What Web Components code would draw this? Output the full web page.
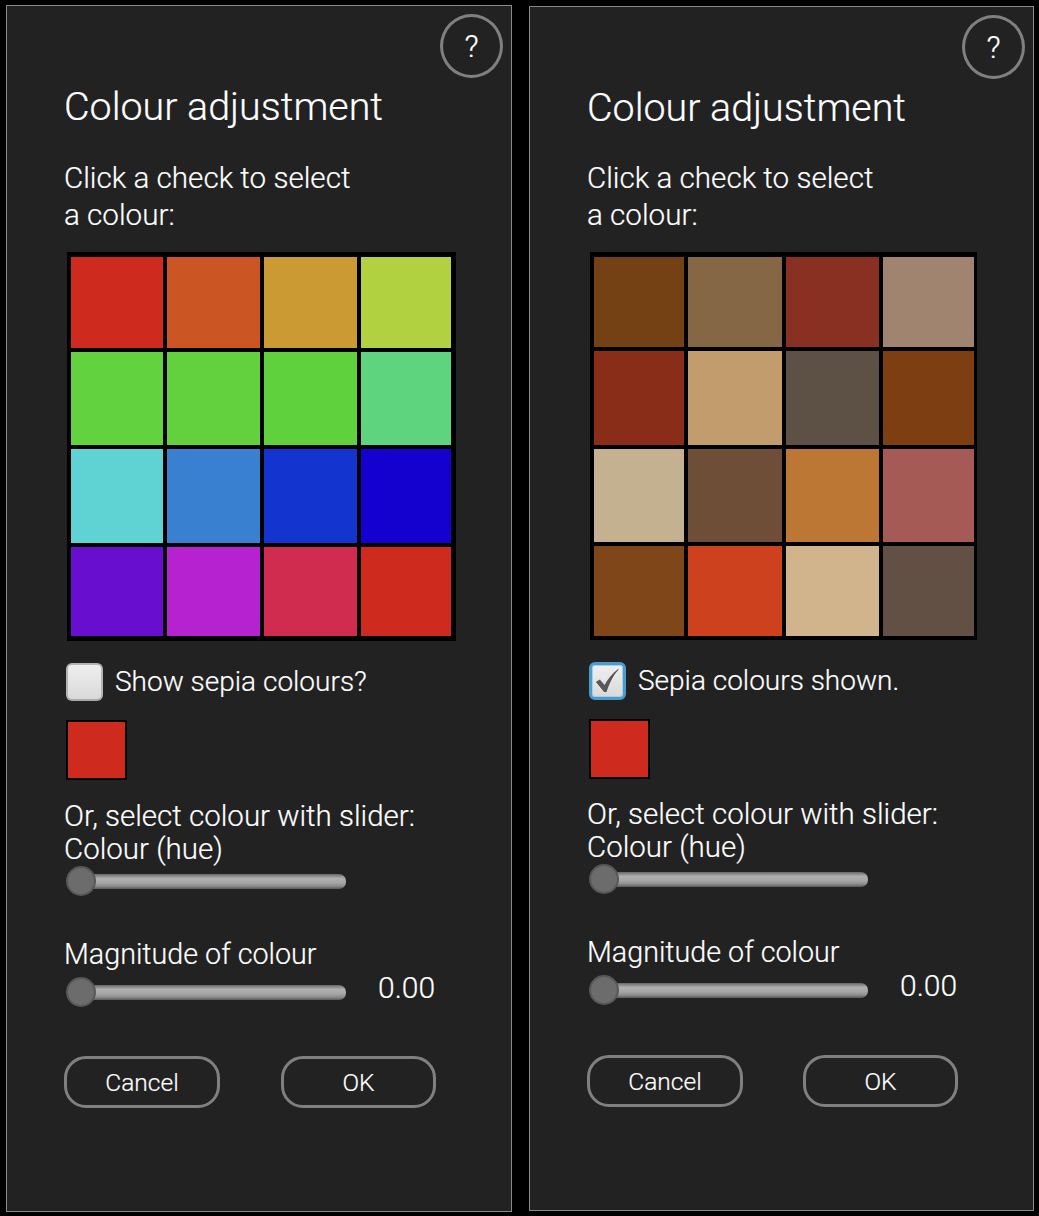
<!DOCTYPE html>
<html>
<head>
<meta charset="utf-8">
<title>Colour adjustment</title>
<style>
html, body { margin: 0; background: #000; }
body { width: 1039px; height: 1216px; overflow: hidden; font-family: "Roboto", "Liberation Sans", sans-serif; font-weight: 300; color: #fff; -webkit-text-stroke: 0.2px #fff; }
.page { display: flex; align-items: flex-start; padding-left: 6px; gap: 17px; }
</style>
</head>
<body>
<div class="page">
  <colour-panel id="plain" label="Show sepia colours?" style="--w:506px;--top:5px;--h:1207px;--nudge-prompt:0px;--nudge-head:0px;--nudge-actions:0px;--button-gap:61px;--track:279px;--grid-tracks:92px 93px 93px 90px;--grid-rows:91px 93px 94px 89px;--grid-pad:5px 5px 5px 4px"></colour-panel>
  <colour-panel id="sepia" sepia label="Sepia colours shown." style="--w:505px;--top:6px;--h:1205px;--nudge-prompt:-1px;--nudge-head:-1px;--nudge-actions:1px;--button-gap:60px;--track:278px;--grid-tracks:90px 94px 93px 91px;--grid-rows:90px 94px 93px 90px;--grid-pad:5px 3px 4px 4px"></colour-panel>
</div>
<script>
const hues = [
  "#cf2a1e", "#cc5524", "#cc9a33", "#b1d141",
  "#63d23f", "#62d13d", "#5fd13c", "#5fd47f",
  "#5fd2d3", "#3a80d0", "#1434d0", "#1400cf",
  "#680fcf", "#b622d0", "#cf2c50", "#ce2b1e"
]
const sepias = [
  "#734113", "#856745", "#8a3023", "#a08470",
  "#892d18", "#c39c6d", "#5d5044", "#7d3e12",
  "#c4b18f", "#6e4e36", "#bd7735", "#a55a55",
  "#7f4719", "#cd411e", "#d2b48c", "#625045"
]

class HelpButton extends HTMLElement {
  constructor() {
    super()
    this.attachShadow({ mode: "open" }).innerHTML = `
<style>
:host { position: absolute; top: 8px; right: 8px; display: flex; align-items: center; justify-content: center;
  box-sizing: border-box; width: 63px; height: 64px; border: 3px solid #808080; border-radius: 50%; font-size: 31px; }
</style>?`
  }
}
customElements.define("help-button", HelpButton)

class SwatchGrid extends HTMLElement {
  constructor() {
    super()
    this.attachShadow({ mode: "open" }).innerHTML = `
<style>
:host { display: grid; width: max-content; box-sizing: border-box; padding: var(--grid-pad); background: #000; gap: 4px;
  grid-template-columns: var(--grid-tracks); grid-template-rows: var(--grid-rows); }
</style><slot></slot>`
  }
}
customElements.define("swatch-grid", SwatchGrid)

class SepiaCheck extends HTMLElement {
  constructor() {
    super()
    const on = this.hasAttribute("checked")
    const mark = "M4 17 L8 14.5 L13 20 C16 14 21 8 27 3.5 L27.5 4.5 C22 10 18 19 15 27.5 L12.5 27.5 Z"
    this.attachShadow({ mode: "open" }).innerHTML = `
<style>
:host { display: flex; align-items: center; gap: 12px; font-size: 28px; }
.box { box-sizing: border-box; width: 37px; height: 38px; border-radius: 6px; background: linear-gradient(#efefef, #d9d9d9);
  border: 2px solid #b4b4b4; border-bottom-color: #a8a8a8; }
:host([checked]) .box { border: 3px solid #4a9ccb; box-shadow: inset 0 0 0 1px #a5cfe6; }
svg { display: block; width: 100%; height: 100%; }
span { padding-bottom: 2px; }
</style>
<div class="box">${on ? `<svg viewBox="0 0 32 32"><path d="${mark}" fill="#fff" transform="translate(0 1)"/><path d="${mark}" fill="#58585a"/></svg>` : ""}</div>
<span><slot></slot></span>`
  }
}
customElements.define("sepia-check", SepiaCheck)

class RangeRow extends HTMLElement {
  constructor() {
    super()
    this.attachShadow({ mode: "open" }).innerHTML = `
<style>
:host { display: flex; align-items: center; gap: 32px; height: 30px; }
.track { position: relative; box-sizing: border-box; width: var(--track); height: 15px; border-radius: 7px;
  background: linear-gradient(#666, #8f8f8f 15%, #b0b0b0 30%, #a5a5a5 60%, #8d8d8d 80%, #5a5a5a); }
.thumb { position: absolute; left: -1px; top: -8px; box-sizing: border-box; width: 30px; height: 30px; border-radius: 50%;
  background: #6c6c6c; border: 2px solid #575757; }
.value { font-size: 30px; padding-bottom: 10px; }
</style>
<div class="track"><div class="thumb"></div></div>
<div class="value"><slot></slot></div>`
  }
}
customElements.define("range-row", RangeRow)

class PillButton extends HTMLElement {
  constructor() {
    super()
    this.attachShadow({ mode: "open" }).innerHTML = `
<style>
:host { display: flex; align-items: center; justify-content: center; box-sizing: border-box; width: 156px; height: 52px;
  border: 3px solid #808080; border-radius: 22px; font-size: 24.5px; }
:host(:last-child) { width: 155px; }
</style><slot></slot>`
  }
}
customElements.define("pill-button", PillButton)

class ColourPanel extends HTMLElement {
  constructor() {
    super()
    const colours = this.hasAttribute("sepia") ? sepias : hues
    const cells = colours.map(c => `<div style="background:${c}"></div>`).join("")
    this.attachShadow({ mode: "open" }).innerHTML = `
<style>
:host { position: relative; display: block; box-sizing: border-box; width: var(--w); height: var(--h); margin-top: var(--top);
  background: #222; border: 1px solid #8a8a8a; padding: 0 0 0 57px; }
h1 { margin: 0; padding-top: 77px; font-size: 39.4px; line-height: 48px; font-weight: 300; }
.prompt { margin: calc(29px + var(--nudge-prompt)) 0 0; font-size: 29.6px; line-height: 37px; }
swatch-grid { margin: 18px 0 0 3px; }
sepia-check { margin: 22px 0 0 2px; }
.preview { box-sizing: border-box; width: 61px; height: 60px; margin: 19px 0 0 2px; background: #cf2a1e; border: 2px solid #000; }
.label { font-size: 29.5px; line-height: 33px; }
.slider-head { margin-top: calc(20px + var(--nudge-head)); }
.hue { margin: 0 0 0 3px; }
.mag { margin-top: 42px; font-size: 28.7px; }
.magnitude { margin: 6px 0 0 3px; }
.actions { display: flex; gap: var(--button-gap); margin-top: calc(49px + var(--nudge-actions)); }
</style>
<help-button></help-button>
<h1>Colour adjustment</h1>
<p class="prompt">Click a check to select<br>a colour:</p>
<swatch-grid>${cells}</swatch-grid>
<sepia-check ${this.hasAttribute("sepia") ? "checked" : ""}>${this.getAttribute("label")}</sepia-check>
<div class="preview"></div>
<div class="label slider-head">Or, select colour with slider:<br>Colour (hue)</div>
<range-row class="hue"></range-row>
<div class="label mag">Magnitude of colour</div>
<range-row class="magnitude">0.00</range-row>
<div class="actions"><pill-button>Cancel</pill-button><pill-button>OK</pill-button></div>`
  }
}
customElements.define("colour-panel", ColourPanel)
</script>
</body>
</html>
